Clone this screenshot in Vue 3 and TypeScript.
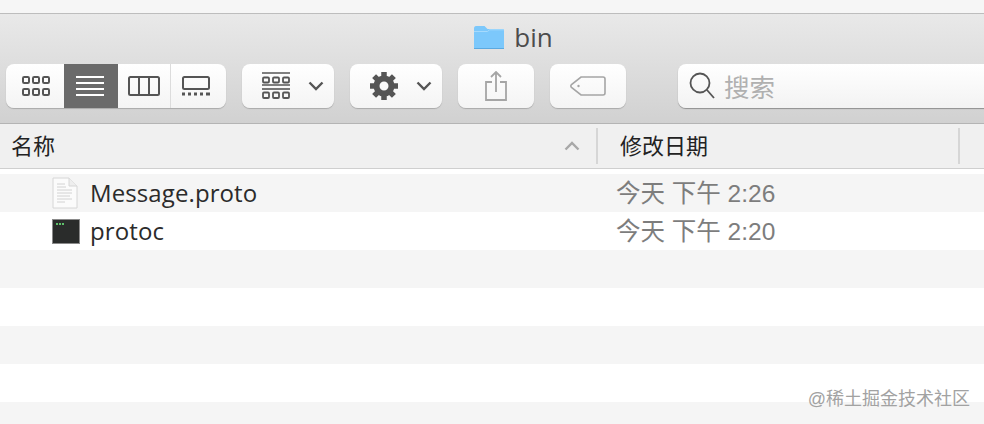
<script setup lang="ts">
interface FileRow {
  name: string
  date: string
  kind: 'doc' | 'exec'
}

const files: FileRow[] = [
  { name: 'Message.proto', date: '今天 下午 2:26', kind: 'doc' },
  { name: 'protoc', date: '今天 下午 2:20', kind: 'exec' },
]

const emptyRows = [0, 1, 2, 3, 4]
</script>

<template>
  <div class="window">
    <div class="top-strip"></div>

    <div class="toolbar">
      <div class="title">
        <svg class="folder" width="32" height="26" viewBox="0 0 32 26">
          <path d="M1 4.500C1 3 1.800 2 3 2h8.500l3 3H30c.7 0 1 .4 1 1v18c0 .7-.4 1-1 1H2c-.7 0-1-.4-1-1z" fill="#7cc8fb" />
          <path d="M1 7.500h13.500l2-1.700H31" fill="none" stroke="#a6dafc" stroke-width="1" />
          <path d="M1 24.500h30" stroke="#5ba9e0" stroke-width="1" />
        </svg>
        <span>bin</span>
      </div>

      <div class="buttons">
        <div class="btn segmented">
          <div class="seg seg-icons">
            <svg width="30" height="22" viewBox="0 0 30 22" fill="none" stroke="#555" stroke-width="2">
              <rect x="2" y="2" width="6" height="6" rx="1.200" /><rect x="12" y="2" width="6" height="6" rx="1.200" /><rect x="22" y="2" width="6" height="6" rx="1.200" />
              <rect x="2" y="14" width="6" height="6" rx="1.200" /><rect x="12" y="14" width="6" height="6" rx="1.200" /><rect x="22" y="14" width="6" height="6" rx="1.200" />
            </svg>
          </div>
          <div class="seg seg-list">
            <svg width="30" height="22" viewBox="0 0 30 22" stroke="#fff" stroke-width="2">
              <path d="M1 2h28M1 8h28M1 14h28M1 20h28" />
            </svg>
          </div>
          <div class="seg seg-cols">
            <svg width="32" height="20" viewBox="0 0 32 20" fill="none" stroke="#555" stroke-width="2">
              <rect x="1" y="1" width="30" height="18" rx="1.500" />
              <path d="M11 1v18M21 1v18" />
            </svg>
          </div>
          <div class="seg seg-gallery">
            <svg width="30" height="20" viewBox="0 0 30 20">
              <rect x="2" y="1" width="26" height="12" rx="1.500" fill="none" stroke="#555" stroke-width="2" />
              <path d="M1 18h3M7 18h3M13 18h3M19 18h3M25 18h4" stroke="#555" stroke-width="3" />
            </svg>
          </div>
        </div>

        <div class="btn btn-menu">
          <svg width="30" height="28" viewBox="0 0 30 28" fill="none" stroke="#555">
            <path d="M1 1h28M1 13h28" stroke-width="1.600" />
            <rect x="2" y="5.500" width="6" height="5" rx="1" stroke-width="1.800" /><rect x="12" y="5.500" width="6" height="5" rx="1" stroke-width="1.800" /><rect x="22" y="5.500" width="6" height="5" rx="1" stroke-width="1.800" />
            <rect x="2" y="20.500" width="6" height="5.500" rx="1" stroke-width="1.800" /><rect x="12" y="20.500" width="6" height="5.500" rx="1" stroke-width="1.800" /><rect x="22" y="20.500" width="6" height="5.500" rx="1" stroke-width="1.800" />
            <path d="M1 17h28" stroke-width="1.600" />
          </svg>
          <svg class="chevron" width="16" height="10" viewBox="0 0 16 10" fill="none" stroke="#555" stroke-width="2.400">
            <path d="M1.500 1.500 8 8l6.500-6.500" />
          </svg>
        </div>

        <div class="btn btn-menu">
          <svg width="30" height="30" viewBox="0 0 30 30">
            <circle cx="15" cy="15" r="7.500" fill="none" stroke="#555" stroke-width="6" />
            <g stroke="#555" stroke-width="5.500">
              <path d="M15 1v6M15 23v6M1 15h6M23 15h6M5.100 5.100l4.200 4.200M20.700 20.700l4.200 4.200M5.100 24.900l4.200-4.200M20.700 9.300l4.200-4.200" />
            </g>
          </svg>
          <svg class="chevron" width="16" height="10" viewBox="0 0 16 10" fill="none" stroke="#555" stroke-width="2.400">
            <path d="M1.500 1.500 8 8l6.500-6.500" />
          </svg>
        </div>

        <div class="btn btn-share">
          <svg width="22" height="30" viewBox="0 0 22 30" fill="none" stroke="#a5a5a5" stroke-width="1.800">
            <path d="M7 11H1v18h20V11h-6" />
            <path d="M11 21V1.500M6 6l5-5 5 5" />
          </svg>
        </div>

        <div class="btn btn-tag">
          <svg width="36" height="20" viewBox="0 0 36 20" fill="none" stroke="#a5a5a5" stroke-width="1.600">
            <path d="M11 1h22c1.300 0 2 .7 2 2v14c0 1.300-.7 2-2 2H11L1.500 11.500c-.9-.9-.9-2.100 0-3z" />
            <circle cx="8.500" cy="10" r="1.200" fill="#a5a5a5" stroke="none" />
          </svg>
        </div>

        <div class="search">
          <svg width="26" height="28" viewBox="0 0 26 28" fill="none" stroke="#555" stroke-width="1.800">
            <circle cx="11" cy="11" r="9.500" />
            <path d="m18 18 7 8" />
          </svg>
          <span>搜索</span>
        </div>
      </div>
    </div>

    <div class="table-head">
      <div class="col-name">
        <span>名称</span>
        <svg class="sort" width="16" height="10" viewBox="0 0 16 10" fill="none" stroke="#a8a8a8" stroke-width="2.400">
          <path d="M1.500 8.500 8 2l6.500 6.500" />
        </svg>
      </div>
      <div class="col-date"><span>修改日期</span></div>
    </div>

    <div class="rows">
      <div v-for="file in files" :key="file.name" class="row">
        <div class="cell-icon">
          <svg v-if="file.kind === 'doc'" width="26" height="32" viewBox="0 0 26 32">
            <path d="M1 1h16l8 8v22H1z" fill="#fbfbfb" stroke="#d6d6d6" />
            <path d="M17 1v8h8" fill="#eee" stroke="#d6d6d6" />
            <path d="M5 7h8M5 10h9M5 13h15M5 16h15M5 19h13M5 22h15M5 25h8" stroke="#d2d2d2" stroke-width="1" />
          </svg>
          <svg v-else width="28" height="25" viewBox="0 0 28 25">
            <rect x="0.500" y="0.500" width="27" height="24" fill="#2a2c2b" stroke="#8a8a8a" />
            <path d="M4 5h9" stroke="#5fc26b" stroke-width="2" stroke-dasharray="2 1" />
          </svg>
        </div>
        <div class="cell-name">{{ file.name }}</div>
        <div class="cell-date">{{ file.date }}</div>
      </div>
      <div v-for="i in emptyRows" :key="i" class="row"></div>
    </div>

    <div class="watermark">@稀土掘金技术社区</div>
  </div>
</template>

<style>
html,
body {
  margin: 0;
  overflow: hidden;
  background: #fff;
}
</style>

<style scoped>
.window {
  position: relative;
  width: 984px;
  height: 424px;
  overflow: hidden;
  font-family: 'Liberation Sans', 'Noto Sans CJK SC', sans-serif;
  background: #fff;
}

.top-strip {
  height: 13px;
  background: #f6f6f6;
}

.toolbar {
  height: 109px;
  border-top: 1px solid #bdbdbd;
  border-bottom: 1px solid #b4b4b4;
  background: linear-gradient(#e9e9e9, #d1d1d1);
}

.title {
  height: 45px;
  padding: 0 0 5px 42px;
  display: flex;
  align-items: center;
  justify-content: center;
  gap: 9px;
  font-size: 26px;
  color: #4c4c4c;
  font-family: 'Open Sans', 'Liberation Sans', sans-serif;
}

.buttons {
  display: flex;
  gap: 16px;
  padding-left: 6px;
  height: 44px;
}

.btn {
  flex: none;
  height: 44px;
  box-sizing: border-box;
  display: flex;
  align-items: center;
  justify-content: center;
  background: linear-gradient(#ffffff, #f4f4f4);
  border-radius: 8px;
  box-shadow: 0 1px 1px #a9a9a9;
}

.segmented {
  width: 220px;
  overflow: hidden;
}

.seg {
  height: 100%;
  box-sizing: border-box;
  display: flex;
  align-items: center;
  justify-content: center;
}

.seg-icons {
  width: 58px;
  padding-left: 2px;
}

.seg-list {
  width: 54px;
  padding-right: 2px;
  background: #6a6a6a;
}

.seg-cols {
  width: 53px;
  border-right: 1px solid #dcdcdc;
}

.seg-gallery {
  flex: 1;
  padding-right: 5px;
}

.btn-menu {
  width: 92px;
  justify-content: flex-start;
  gap: 17px;
  padding-left: 19px;
}

.btn-share,
.btn-tag {
  width: 76px;
}

.search {
  flex: none;
  width: 340px;
  height: 44px;
  margin-left: 36px;
  box-sizing: border-box;
  display: flex;
  align-items: center;
  gap: 9px;
  padding-left: 11px;
  background: linear-gradient(#ffffff, #f3f3f3);
  border-radius: 8px 0 0 8px;
  box-shadow: 0 1px 1px #8f8f8f;
  font-size: 25.500px;
  color: #b0b0b0;
}

.search span {
  margin-top: -2px;
}

.table-head {
  height: 44px;
  display: flex;
  align-items: center;
  background: #f0f0f0;
  border-bottom: 1px solid #cfcfcf;
  font-size: 22px;
  color: #222;
}

.table-head span {
  margin-top: -4px;
}

.col-name {
  width: 598px;
  height: 36px;
  box-sizing: border-box;
  display: flex;
  align-items: center;
  justify-content: space-between;
  padding: 0 16px 0 11px;
  border-right: 2px solid #d6d6d6;
}

.col-date {
  width: 362px;
  height: 36px;
  box-sizing: border-box;
  display: flex;
  align-items: center;
  padding-left: 22px;
  border-right: 2px solid #d6d6d6;
}

.rows {
  padding-top: 5px;
}

.row {
  height: 38px;
  display: flex;
  align-items: center;
}

.row:nth-child(odd) {
  background: #f5f5f5;
}

.cell-icon {
  width: 90px;
  height: 100%;
  box-sizing: border-box;
  padding-left: 52px;
  display: flex;
  align-items: center;
}

.cell-name {
  width: 526px;
  margin-top: -2px;
  color: #2b2b2b;
  font-family: 'Open Sans', 'Liberation Sans', sans-serif;
  font-size: 24px;
  letter-spacing: 0.1px;
}

.cell-date {
  color: #7d7d7d;
  font-size: 24.500px;
  margin-top: -3px;
  white-space: nowrap;
}

.watermark {
  position: absolute;
  right: 14px;
  bottom: 14px;
  font-size: 18px;
  color: #a2a2a2;
  white-space: nowrap;
}
</style>
